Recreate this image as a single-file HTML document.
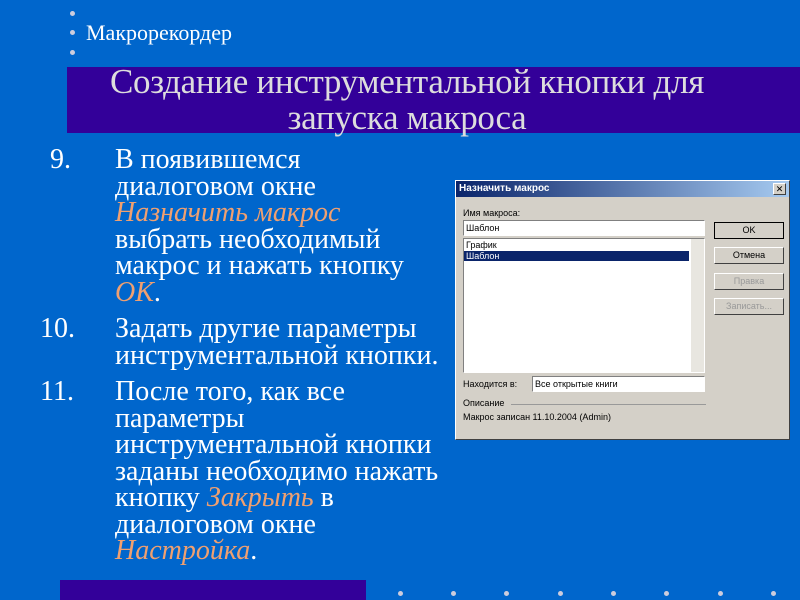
<!DOCTYPE html>
<html><head><meta charset="utf-8"><style>
*{margin:0;padding:0;box-sizing:border-box}
body{width:800px;height:600px;background:#0066cc;position:relative;overflow:hidden;font-family:"Liberation Serif",serif;color:#fff}
.dot{position:absolute;width:5px;height:5px;border-radius:50%;background:#ccd}
.hdr{position:absolute;left:86px;top:20px;font-size:22px;letter-spacing:0;color:#fff;white-space:nowrap}
.tbar{position:absolute;left:67px;top:67px;width:733px;height:66px;background:#330099}
.title{position:absolute;left:67px;top:64px;width:680px;text-align:center;font-size:35px;line-height:36px;letter-spacing:-0.3px;color:#ddd;white-space:nowrap}
.list{position:absolute;left:0;top:147px;font-size:28px;line-height:26.5px;letter-spacing:0;white-space:nowrap}
.it{position:relative;padding-left:115px;width:460px;margin-bottom:10px}
.n{position:absolute;left:40px;top:0}
.o{color:#f0a070;font-style:italic}
.bbar{position:absolute;left:60px;top:580px;width:306px;height:20px;background:#330099}
.dlg{position:absolute;left:455px;top:180px;width:335px;height:260px;background:#d4d0c8;border:1px solid #fff;border-right-color:#404040;border-bottom-color:#404040;font-family:"Liberation Sans",sans-serif;font-size:9px;color:#000}
.dt{height:16px;background:linear-gradient(90deg,#0a246a,#a6caf0);color:#fff;font-weight:bold;font-size:10px;padding:2px 3px}
.x{position:absolute;right:3px;top:2px;width:13px;height:12px;background:#d4d0c8;border:1px solid #fff;border-right-color:#404040;border-bottom-color:#404040;font-size:9px;text-align:center;line-height:10px;color:#000}
.ab{position:absolute;white-space:nowrap}
.fld{background:#fff;border:1px solid #808080;border-right-color:#fff;border-bottom-color:#fff}
.btn{position:absolute;left:258px;width:70px;height:17px;border:1px solid #fff;border-right-color:#404040;border-bottom-color:#404040;text-align:center;line-height:15px;font-size:9px}
</style></head><body>
<div class="dot" style="left:70px;top:11px"></div>
<div class="dot" style="left:70px;top:30px"></div>
<div class="dot" style="left:70px;top:50px"></div>
<div class="hdr">Макрорекордер</div>
<div class="tbar"></div>
<div class="title">Создание инструментальной кнопки для<br>запуска макроса</div>
<div class="list">
<div class="it"><span class="n" style="left:50px">9.</span>В появившемся<br>диалоговом окне<br><span class="o">Назначить макрос</span><br>выбрать необходимый<br>макрос и нажать кнопку<br><span class="o">ОК</span>.</div>
<div class="it"><span class="n">10.</span>Задать другие параметры<br>инструментальной кнопки.</div>
<div class="it"><span class="n">11.</span>После того, как все<br>параметры<br>инструментальной кнопки<br>заданы необходимо нажать<br>кнопку <span class="o">Закрыть</span> в<br>диалоговом окне<br><span class="o">Настройка</span>.</div>
</div>
<div class="bbar"></div>
<div class="dot" style="left:398px;top:591px"></div><div class="dot" style="left:451px;top:591px"></div><div class="dot" style="left:504px;top:591px"></div><div class="dot" style="left:558px;top:591px"></div><div class="dot" style="left:611px;top:591px"></div><div class="dot" style="left:664px;top:591px"></div><div class="dot" style="left:718px;top:591px"></div><div class="dot" style="left:771px;top:591px"></div>
<div class="dlg">
<div class="dt">Назначить макрос</div><div class="x">✕</div>
<div class="ab" style="left:7px;top:27px">Имя макроса:</div>
<div class="ab fld" style="left:7px;top:39px;width:242px;height:16px;padding:2px">Шаблон</div>
<div class="ab fld" style="left:7px;top:57px;width:242px;height:135px">
<div style="padding:1px 2px;line-height:10px">График</div>
<div style="background:#0a246a;color:#fff;width:225px;padding:0 2px;line-height:10px">Шаблон</div>
<div class="ab" style="right:0;top:0;width:13px;height:133px;background:#e8e6e0"></div>
</div>
<div class="btn" style="top:41px;border:1px solid #000">OK</div>
<div class="btn" style="top:66px">Отмена</div>
<div class="btn" style="top:92px;color:#999">Правка</div>
<div class="btn" style="top:117px;color:#999">Записать...</div>
<div class="ab" style="left:7px;top:198px">Находится в:</div>
<div class="ab fld" style="left:76px;top:195px;width:173px;height:16px;padding:2px">Все открытые книги</div>
<div class="ab" style="left:7px;top:217px">Описание</div>
<div class="ab" style="left:55px;top:223px;width:195px;border-top:1px solid #999"></div>
<div class="ab" style="left:7px;top:231px">Макрос записан 11.10.2004 (Admin)</div>
</div>
</body></html>
